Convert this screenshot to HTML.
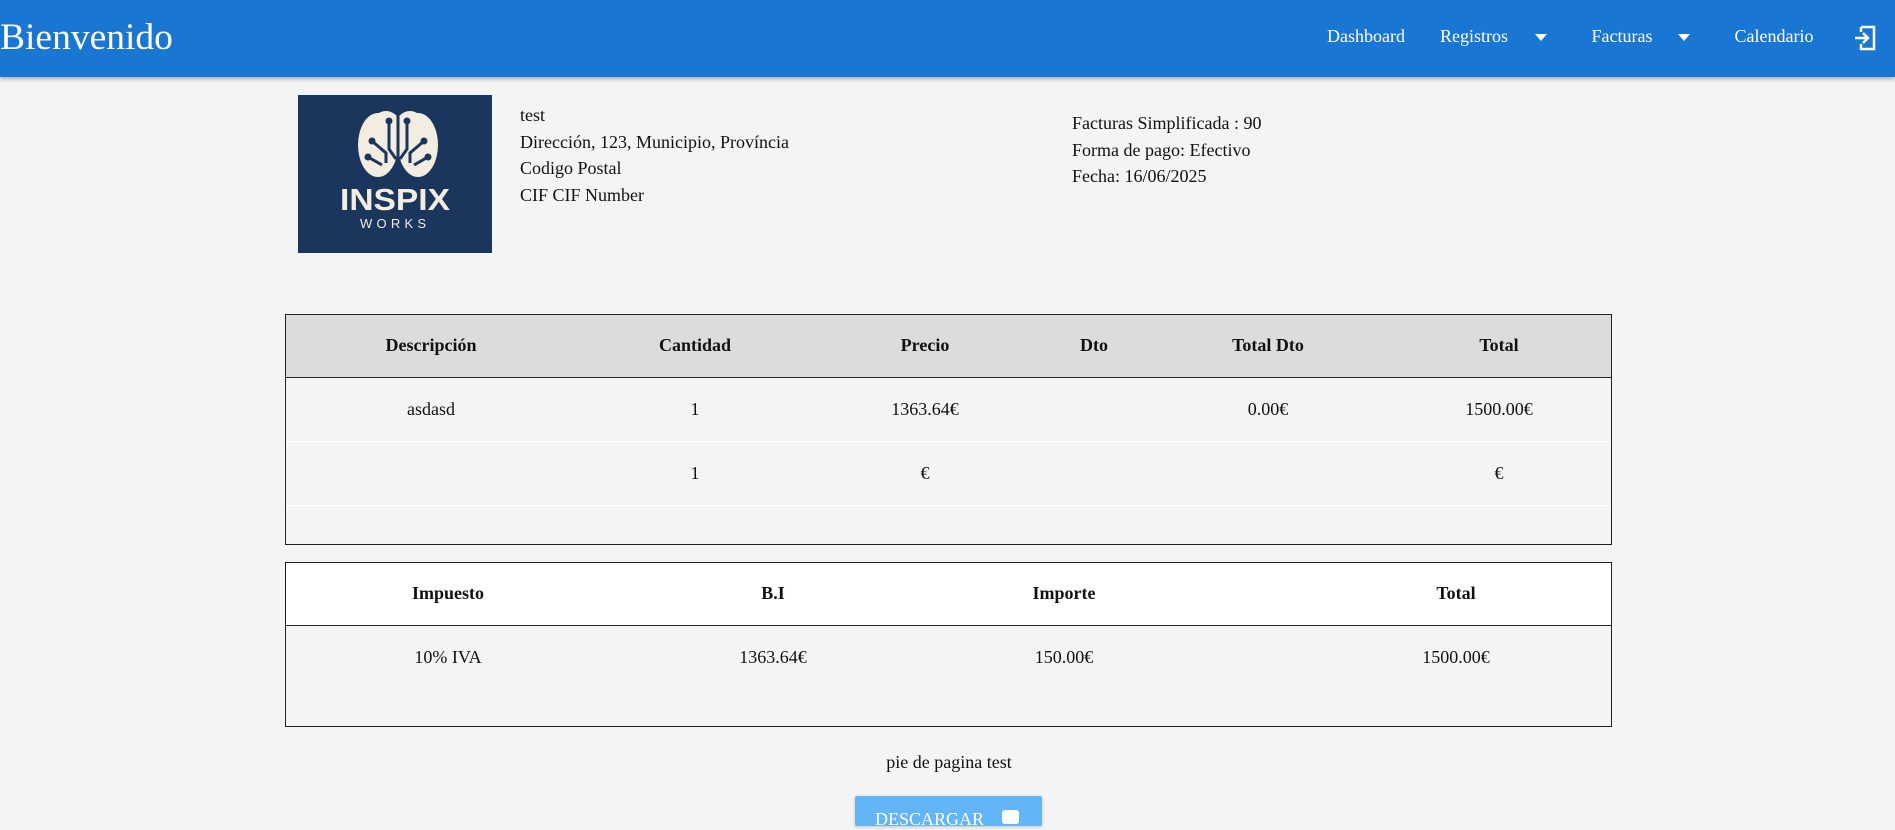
<!DOCTYPE html>
<html><head><meta charset="utf-8"><style>
*{margin:0;padding:0;box-sizing:border-box}
body{width:1895px;height:818px;overflow:hidden;background:#f4f4f4;font-family:"Liberation Serif",serif;color:#111;position:relative}
.hdr{position:absolute;left:0;top:0;width:1895px;height:77px;background:#1976d2;box-shadow:0 2px 4px rgba(0,0,0,.3)}
.a{position:absolute;white-space:nowrap}
.nav{color:#fff;font-size:18px;top:26px}
.c{transform:translateX(-50%)}
.t{font-size:18px}
.b{font-weight:bold}
</style></head><body>
<div class="hdr">
<div class="a" style="left:0;top:16px;color:#fff;font-size:37.5px">Bienvenido</div>
<div class="a nav c" style="left:1366px">Dashboard</div>
<div class="a nav c" style="left:1474px">Registros</div>
<div class="a" style="left:1535px;top:34px;border-left:6px solid transparent;border-right:6px solid transparent;border-top:7px solid #fff"></div>
<div class="a nav c" style="left:1622px">Facturas</div>
<div class="a" style="left:1678px;top:34px;border-left:6px solid transparent;border-right:6px solid transparent;border-top:7px solid #fff"></div>
<div class="a nav c" style="left:1774px">Calendario</div>
<svg class="a" style="left:1853px;top:25px" width="24" height="26" viewBox="0 0 24 26"><path d="M8 2H21V24H8V19M8 7V2M8 19v5" fill="none" stroke="#fff" stroke-width="2.5"/><path d="M2 13H15M10 8l5 5-5 5" fill="none" stroke="#fff" stroke-width="2.5"/></svg>
</div>

<div class="a" style="left:298px;top:95px;width:194px;height:158px;background:#1b365d">
<svg width="194" height="158" viewBox="0 0 194 158">
<g fill="#f3ece0"><ellipse cx="80" cy="50" rx="20" ry="32"/><ellipse cx="120" cy="50" rx="20" ry="32"/><ellipse cx="88" cy="30" rx="14" ry="14"/><ellipse cx="112" cy="30" rx="14" ry="14"/></g>
<g stroke="#1b365d" stroke-width="3" fill="none"><path d="M100 18V82M91 26v28l7 10M109 26v28l-7 10M74 46l14 12v10M126 46l-14 12v10M70 62l14 8M130 62l-14 8"/></g>
<g fill="#1b365d"><circle cx="91" cy="26" r="3.5"/><circle cx="109" cy="26" r="3.5"/><circle cx="74" cy="46" r="3.5"/><circle cx="126" cy="46" r="3.5"/><circle cx="70" cy="62" r="3.5"/><circle cx="130" cy="62" r="3.5"/></g>
<text x="97" y="115" text-anchor="middle" fill="#f3ece0" font-family="Liberation Sans,sans-serif" font-weight="bold" font-size="31" textLength="110" lengthAdjust="spacingAndGlyphs">INSPIX</text>
<text x="97" y="133" text-anchor="middle" fill="#f3ece0" font-family="Liberation Sans,sans-serif" font-size="13" letter-spacing="4" textLength="70">WORKS</text>
</svg></div>

<div class="a t" style="left:520px;top:102px;line-height:26.6px">test<br>Dirección, 123, Municipio, Província<br>Codigo Postal<br>CIF CIF Number</div>
<div class="a t" style="left:1072px;top:110px;line-height:26.6px">Facturas Simplificada : 90<br>Forma de pago: Efectivo<br>Fecha: 16/06/2025</div>

<div class="a" style="left:285px;top:314px;width:1327px;height:231px;border:1.5px solid #222"></div>
<div class="a" style="left:286px;top:315px;width:1325px;height:63px;background:#dcdcdc;border-bottom:1.5px solid #222"></div>
<div class="a" style="left:286px;top:441px;width:1325px;height:1px;background:#fff"></div>
<div class="a" style="left:286px;top:505px;width:1325px;height:1px;background:#fff"></div>
<div class="a t b c" style="left:431px;top:335px">Descripción</div>
<div class="a t b c" style="left:695px;top:335px">Cantidad</div>
<div class="a t b c" style="left:925px;top:335px">Precio</div>
<div class="a t b c" style="left:1094px;top:335px">Dto</div>
<div class="a t b c" style="left:1268px;top:335px">Total Dto</div>
<div class="a t b c" style="left:1499px;top:335px">Total</div>
<div class="a t c" style="left:431px;top:399px">asdasd</div>
<div class="a t c" style="left:695px;top:399px">1</div>
<div class="a t c" style="left:925px;top:399px">1363.64€</div>
<div class="a t c" style="left:1268px;top:399px">0.00€</div>
<div class="a t c" style="left:1499px;top:399px">1500.00€</div>
<div class="a t c" style="left:695px;top:463px">1</div>
<div class="a t c" style="left:925px;top:463px">€</div>
<div class="a t c" style="left:1499px;top:463px">€</div>

<div class="a" style="left:285px;top:562px;width:1327px;height:165px;border:1.5px solid #222"></div>
<div class="a" style="left:286px;top:563px;width:1325px;height:63px;background:#fff;border-bottom:1.5px solid #222"></div>
<div class="a t b c" style="left:448px;top:583px">Impuesto</div>
<div class="a t b c" style="left:773px;top:583px">B.I</div>
<div class="a t b c" style="left:1064px;top:583px">Importe</div>
<div class="a t b c" style="left:1456px;top:583px">Total</div>
<div class="a t c" style="left:448px;top:647px">10% IVA</div>
<div class="a t c" style="left:773px;top:647px">1363.64€</div>
<div class="a t c" style="left:1064px;top:647px">150.00€</div>
<div class="a t c" style="left:1456px;top:647px">1500.00€</div>

<div class="a t c" style="left:949px;top:752px">pie de pagina test</div>
<div class="a" style="left:855px;top:796px;width:187px;height:30px;background:#64b5f6;border-radius:2px;box-shadow:0 1px 3px rgba(0,0,0,.2)"></div>
<div class="a" style="left:875px;top:809px;color:#fff;font-size:18px">DESCARGAR</div>
<div class="a" style="left:1002px;top:810px;width:17px;height:14px;border-radius:3px;background:#fff"></div>
</body></html>
